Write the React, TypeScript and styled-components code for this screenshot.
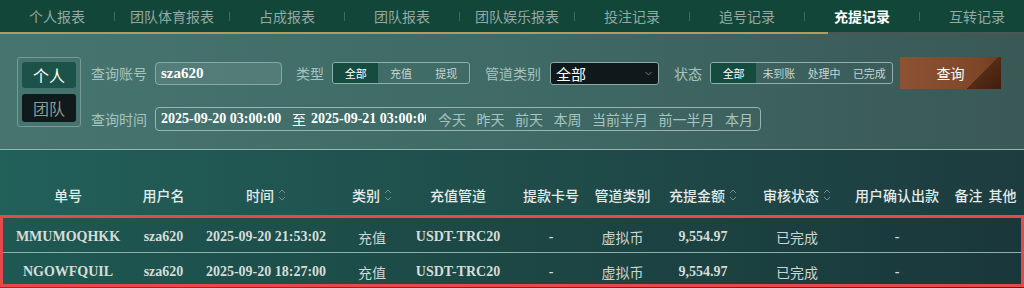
import React from "react";
import styled, { createGlobalStyle } from "styled-components";

const GlobalStyle = createGlobalStyle`
  html, body { margin: 0; padding: 0; background: #1e3d40; overflow: hidden; }
  body { font-family: "Noto Sans CJK SC", "Noto Sans", sans-serif; }
  * { box-sizing: border-box; }
`;

const COLS = [130, 61, 144, 68, 104, 82, 61, 100, 88, 112, 31, 37];
const GRID = COLS.map((c) => `${c}px`).join(" ");

const Page = styled.div`
  width: 1024px;
  height: 288px;
  display: flex;
  flex-direction: column;
  overflow: hidden;
`;

const TabBar = styled.nav`
  display: flex;
  align-items: center;
  height: 32px;
  background: #124639;
`;

const Tab = styled.div<{ $active?: boolean }>`
  flex: 0 0 114px;
  height: 100%;
  display: flex;
  align-items: center;
  justify-content: center;
  font-size: 14px;
  color: ${(p) => (p.$active ? "#ffffff" : "#95a9a2")};
  font-weight: ${(p) => (p.$active ? 700 : 400)};
`;

const TabDivider = styled.span`
  flex: 0 0 1px;
  height: 9px;
  background: #3c6c61;
`;

const Underline = styled.div`
  height: 2px;
  background: linear-gradient(90deg, #b49c5e 0, #b49c5e 828px, #4a5855 828px, #4a5855 100%);
`;

const Filter = styled.section`
  height: 116px;
  display: flex;
  align-items: flex-start;
  padding: 23px 0 0 17px;
  background: linear-gradient(90deg, #467570 0%, #3f6a66 50%, #3a5856 100%);
  border-bottom: 1px solid #9bb3af;
`;

const Toggle = styled.div`
  width: 64px;
  height: 70px;
  border: 1px solid #789a95;
  border-radius: 3px;
  padding: 4px;
  display: flex;
  flex-direction: column;
  gap: 6px;
`;

const ToggleBtn = styled.div<{ $active?: boolean }>`
  height: ${(p) => (p.$active ? 26 : 28)}px;
  border-radius: 3px;
  display: flex;
  align-items: center;
  justify-content: center;
  font-size: 16px;
  background: ${(p) => (p.$active ? "#1c5247" : "#101a1b")};
  color: ${(p) => (p.$active ? "#ffffff" : "#8a9b98")};
`;

const Fields = styled.div`
  margin-left: 10px;
  display: flex;
  flex-direction: column;
`;

const Row = styled.div<{ $h: number; $mt?: number }>`
  display: flex;
  align-items: center;
  height: ${(p) => p.$h}px;
  margin-top: ${(p) => p.$mt ?? 0}px;
`;

const Label = styled.span<{ $mr: number }>`
  font-size: 14px;
  color: #a7c3bf;
  margin-right: ${(p) => p.$mr}px;
  white-space: nowrap;
`;

const TextInput = styled.div`
  width: 127px;
  height: 23px;
  border: 1px solid #88a8a4;
  border-radius: 4px;
  background: rgba(255, 255, 255, 0.09);
  padding-left: 5px;
  display: flex;
  align-items: center;
  font-family: "Liberation Serif", serif;
  font-weight: 700;
  font-size: 15px;
  color: #ffffff;
  margin-right: 14px;
`;

const Seg = styled.div<{ $w: number; $mr: number }>`
  width: ${(p) => p.$w}px;
  height: 22px;
  border: 1px solid #8fb0ab;
  border-radius: 3px;
  display: flex;
  overflow: hidden;
  margin-right: ${(p) => p.$mr}px;
`;

const SegItem = styled.div<{ $active?: boolean }>`
  flex: 1;
  display: flex;
  align-items: center;
  justify-content: center;
  font-size: 11px;
  color: ${(p) => (p.$active ? "#ffffff" : "#c6d6d2")};
  background: ${(p) => (p.$active ? "#164b3f" : "transparent")};
`;

const Select = styled.div`
  width: 109px;
  height: 23px;
  border: 1px solid #8fa9a6;
  border-radius: 3px;
  background: #0f181a;
  display: flex;
  align-items: center;
  justify-content: space-between;
  padding: 0 6px 0 5px;
  font-size: 15px;
  color: #ffffff;
  margin-right: 15px;
`;

const QueryBtn = styled.button`
  width: 101px;
  height: 32px;
  border: none;
  padding: 0;
  font-family: inherit;
  font-size: 14px;
  color: #ffffff;
  background:
    linear-gradient(135deg, transparent 0, transparent 74%, #552b15 74%, #3f1f0d 100%),
    linear-gradient(90deg, #8c5233 0%, #7e4628 80%, #6a3a20 100%);
`;

const DateBox = styled.div`
  width: 606px;
  height: 24px;
  border: 1px solid #9ab4b0;
  border-radius: 4px;
  display: flex;
  align-items: center;
  padding-left: 5px;
`;

const DateText = styled.span<{ $w: number }>`
  flex: 0 0 ${(p) => p.$w}px;
  overflow: hidden;
  white-space: nowrap;
  font-family: "Liberation Serif", serif;
  font-weight: 700;
  font-size: 14px;
  color: #ffffff;
`;

const RangeSep = styled.span`
  font-size: 14px;
  color: #ffffff;
  margin-right: 5px;
`;

const Quick = styled.div`
  display: flex;
  gap: 10.5px;
  margin-left: 12px;
`;

const QuickItem = styled.span`
  font-size: 14px;
  color: #a9c5c1;
  white-space: nowrap;
`;

const TableArea = styled.section`
  flex: 1;
  padding-top: 25px;
  background: linear-gradient(90deg, #22605a 0%, #1f4d4a 50%, #1d3c40 100%);
`;

const HeadRow = styled.div`
  display: grid;
  grid-template-columns: ${GRID};
  height: 40px;
  padding: 0 3px;
  align-items: center;
`;

const HeadCell = styled.div`
  min-width: 0;
  display: flex;
  align-items: center;
  justify-content: center;
  white-space: nowrap;
  font-size: 14px;
  font-weight: 500;
  color: #e3eae8;
`;

const SortIcon = () => (
  <svg width="8" height="14" viewBox="0 0 8 14" style={{ marginLeft: 4 }}>
    <path d="M1 5 L4 2 L7 5 M1 9 L4 12 L7 9" fill="none" stroke="#6e8e8a" strokeWidth="1" />
  </svg>
);

const Box = styled.div`
  border: 3px solid #e5494d;
  overflow: hidden;
`;

const DataRow = styled.div<{ $h: number; $sep?: boolean }>`
  display: grid;
  grid-template-columns: ${GRID};
  height: ${(p) => p.$h}px;
  align-items: start;
  padding-top: 9px;
  background: rgba(0, 0, 0, 0.07);
  border-bottom: ${(p) => (p.$sep ? "1px solid #8db0ab" : "none")};
`;

const Cell = styled.div<{ $serif?: boolean }>`
  min-width: 0;
  display: flex;
  justify-content: center;
  white-space: nowrap;
  line-height: 20px;
  font-size: 14px;
  font-family: ${(p) => (p.$serif ? `"Liberation Serif", serif` : `"Noto Sans CJK SC", sans-serif`)};
  font-weight: ${(p) => (p.$serif ? 700 : 400)};
  color: ${(p) => (p.$serif ? "#d6ddd8" : "#ccd6d2")};
`;

const tabs = ["个人报表", "团队体育报表", "占成报表", "团队报表", "团队娱乐报表", "投注记录", "追号记录", "充提记录", "互转记录"];
const heads: [string, boolean][] = [
  ["单号", false], ["用户名", false], ["时间", true], ["类别", true], ["充值管道", false],
  ["提款卡号", false], ["管道类别", false], ["充提金额", true], ["审核状态", true],
  ["用户确认出款", false], ["备注", false], ["其他", false],
];
const rows = [
  { id: "MMUMOQHKK", time: "2025-09-20 21:53:02", h: 35 },
  { id: "NGOWFQUIL", time: "2025-09-20 18:27:00", h: 31 },
];

export default function App() {
  return (
    <Page>
      <GlobalStyle />
      <TabBar>
        {tabs.map((t, i) => (
          <React.Fragment key={t}>
            {i > 0 && <TabDivider />}
            <Tab $active={t === "充提记录"}>{t}</Tab>
          </React.Fragment>
        ))}
      </TabBar>
      <Underline />
      <Filter>
        <Toggle>
          <ToggleBtn $active>个人</ToggleBtn>
          <ToggleBtn>团队</ToggleBtn>
        </Toggle>
        <Fields>
          <Row $h={32}>
            <Label $mr={8}>查询账号</Label>
            <TextInput>sza620</TextInput>
            <Label $mr={8}>类型</Label>
            <Seg $w={138} $mr={15}>
              <SegItem $active>全部</SegItem>
              <SegItem>充值</SegItem>
              <SegItem>提现</SegItem>
            </Seg>
            <Label $mr={9}>管道类别</Label>
            <Select>
              <span>全部</span>
              <svg width="7" height="5" viewBox="0 0 7 5">
                <path d="M0.5 1 L3.5 4 L6.5 1" fill="none" stroke="#6f7d7d" strokeWidth="1" />
              </svg>
            </Select>
            <Label $mr={8}>状态</Label>
            <Seg $w={183} $mr={7}>
              <SegItem $active>全部</SegItem>
              <SegItem>未到账</SegItem>
              <SegItem>处理中</SegItem>
              <SegItem>已完成</SegItem>
            </Seg>
            <QueryBtn>查询</QueryBtn>
          </Row>
          <Row $h={24} $mt={18}>
            <Label $mr={8}>查询时间</Label>
            <DateBox>
              <DateText $w={131}>2025-09-20 03:00:00</DateText>
              <RangeSep>至</RangeSep>
              <DateText $w={115}>2025-09-21 03:00:00</DateText>
              <Quick>
                {["今天", "昨天", "前天", "本周", "当前半月", "前一半月", "本月"].map((q) => (
                  <QuickItem key={q}>{q}</QuickItem>
                ))}
              </Quick>
            </DateBox>
          </Row>
        </Fields>
      </Filter>
      <TableArea>
        <HeadRow>
          {heads.map(([h, s]) => (
            <HeadCell key={h}>
              {h}
              {s && <SortIcon />}
            </HeadCell>
          ))}
        </HeadRow>
        <Box>
          {rows.map((r, i) => (
            <DataRow key={r.id} $h={r.h} $sep={i === 0}>
              <Cell $serif>{r.id}</Cell>
              <Cell $serif>sza620</Cell>
              <Cell $serif>{r.time}</Cell>
              <Cell>充值</Cell>
              <Cell $serif>USDT-TRC20</Cell>
              <Cell $serif>-</Cell>
              <Cell>虚拟币</Cell>
              <Cell $serif>9,554.97</Cell>
              <Cell>已完成</Cell>
              <Cell $serif>-</Cell>
              <Cell />
              <Cell />
            </DataRow>
          ))}
        </Box>
      </TableArea>
    </Page>
  );
}
